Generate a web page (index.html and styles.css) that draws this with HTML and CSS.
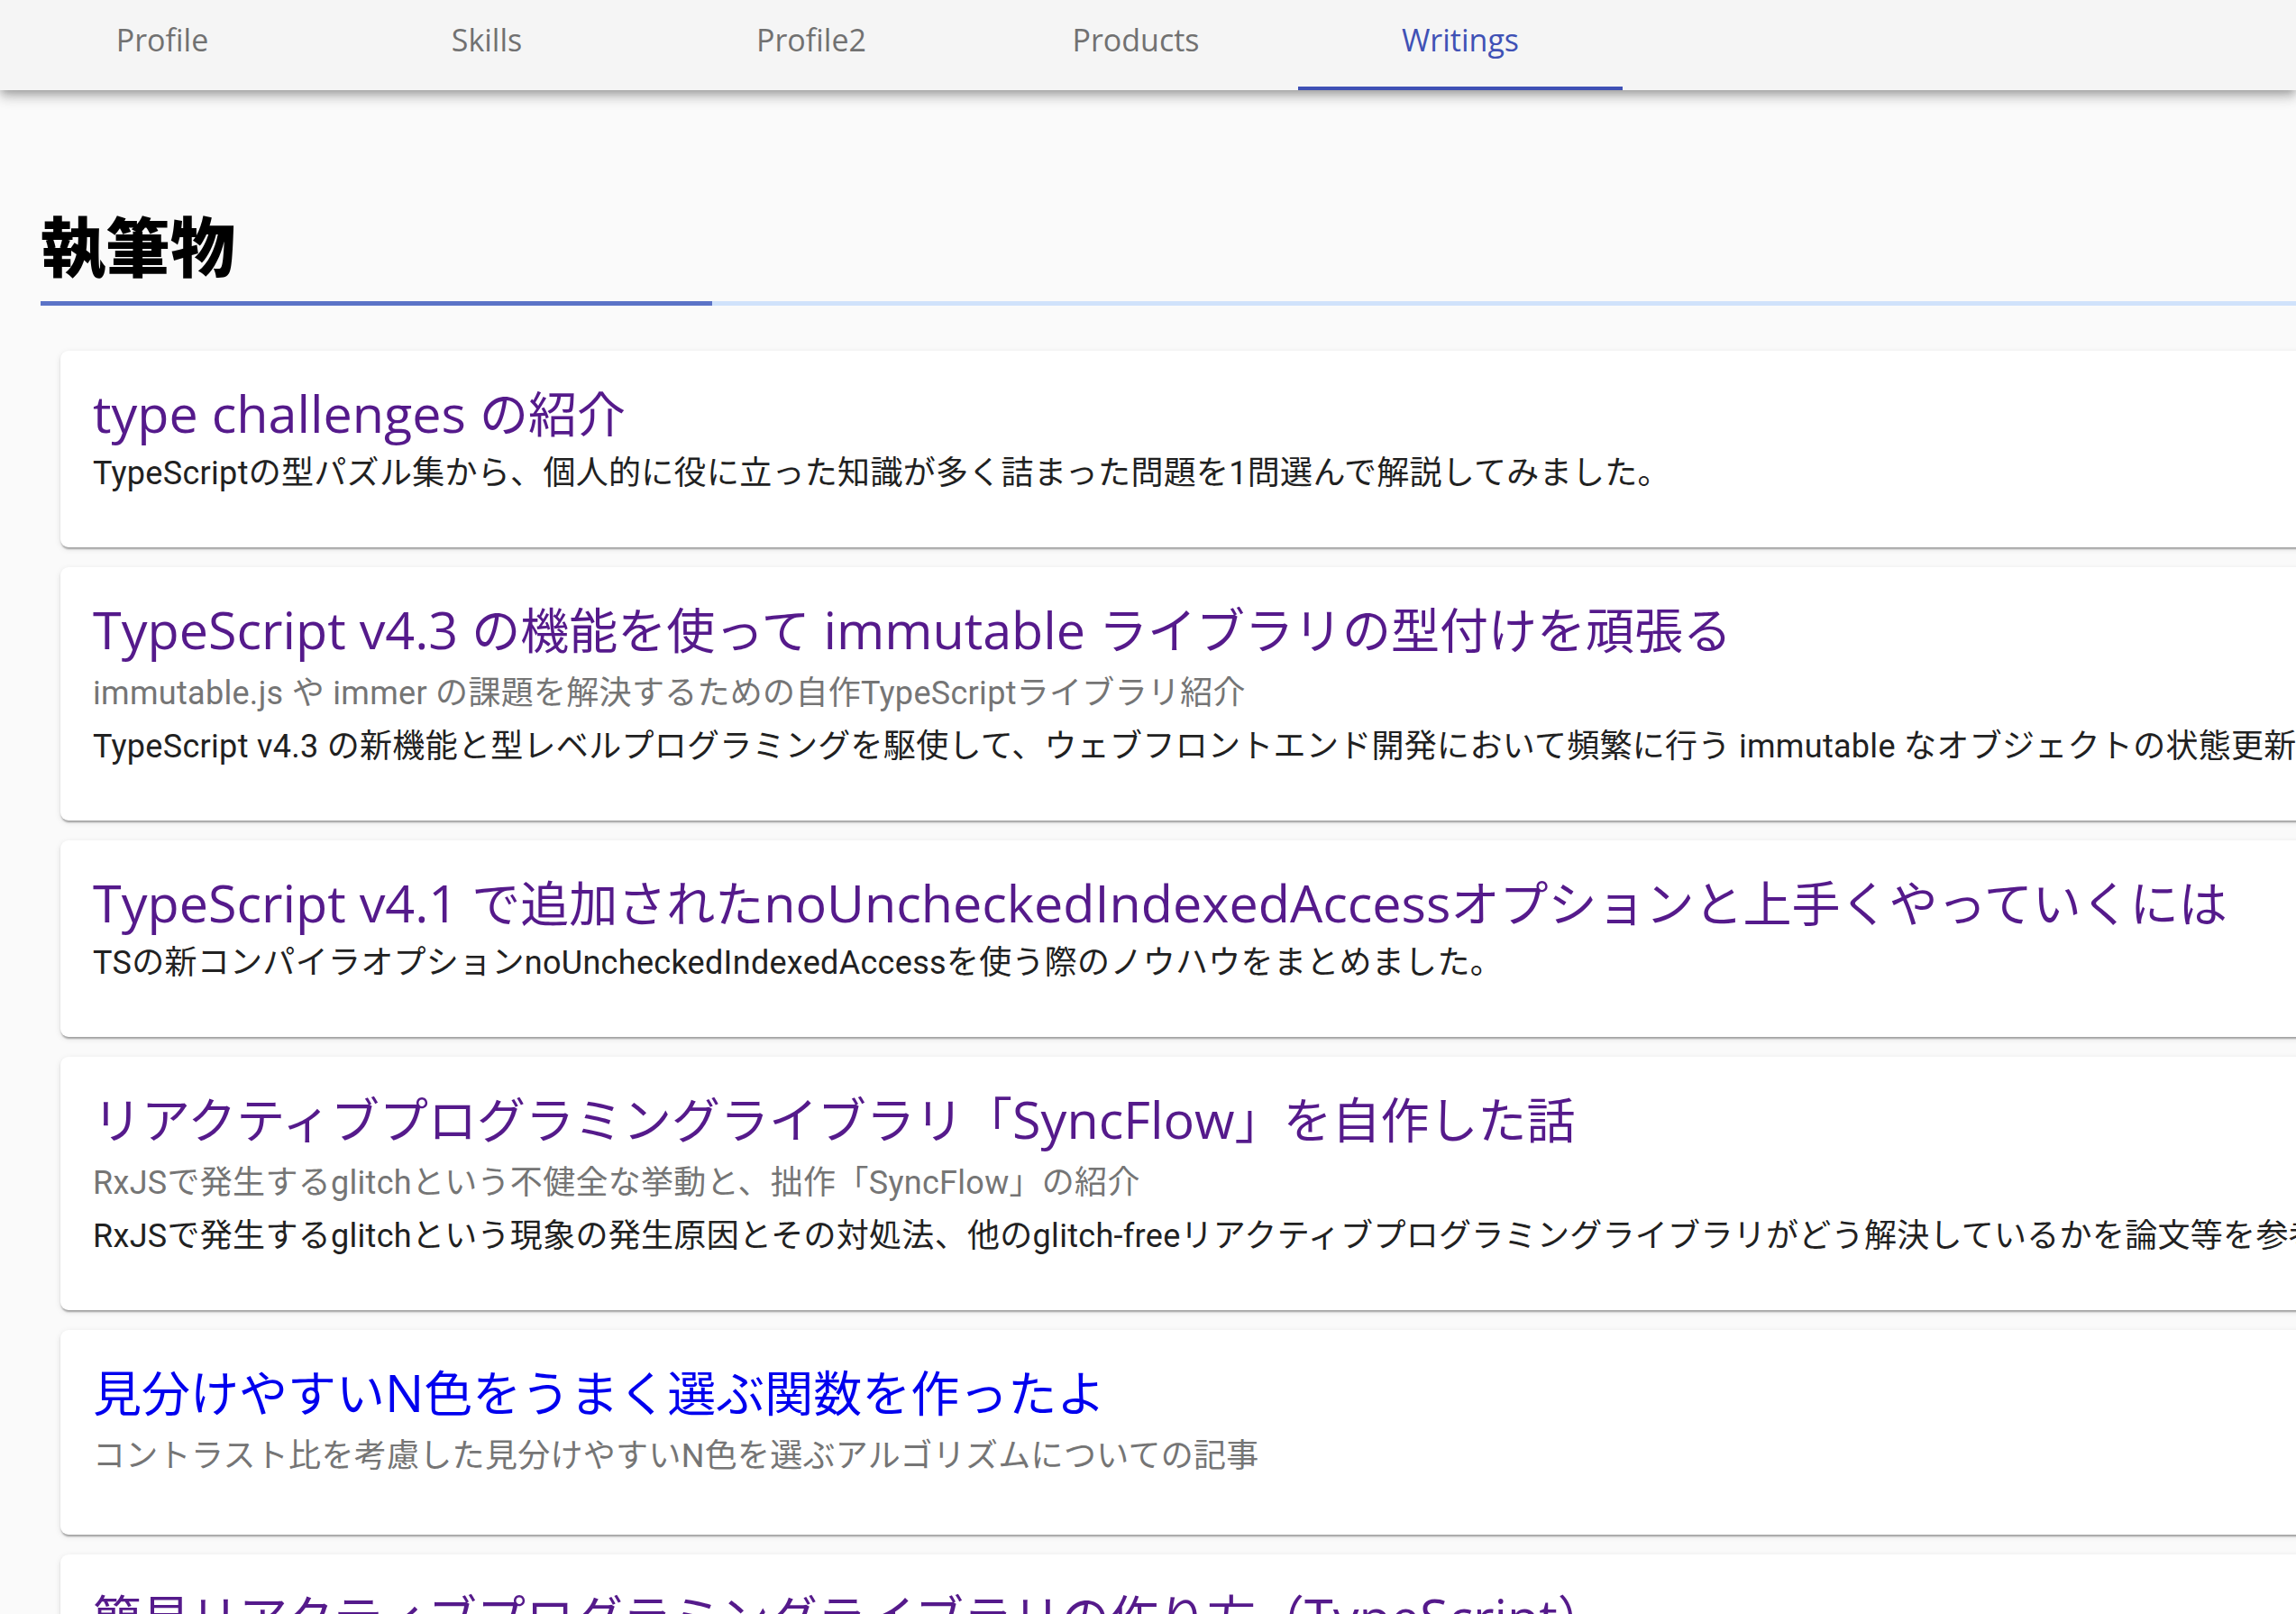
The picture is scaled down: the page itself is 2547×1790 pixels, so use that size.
FILE: index.html
```html
<!DOCTYPE html>
<html lang="ja">
<head>
<meta charset="utf-8">
<title>Writings</title>
<link rel="stylesheet" href="styles.css">
</head>
<body>
<nav class="nav">
  <div class="tab">Profile</div>
  <div class="tab">Skills</div>
  <div class="tab">Profile2</div>
  <div class="tab">Products</div>
  <div class="tab active">Writings</div>
</nav>
<main class="main">
  <h1 class="heading">執筆物</h1>
  <div class="rule"><div class="rule-main"></div><div class="rule-rest"></div></div>
  <div class="list">
    <div class="card">
      <a class="title visited" href="#"><span class="en">type challenges </span>の紹介</a>
      <div class="desc">TypeScriptの型パズル集から、個人的に役に立った知識が多く詰まった問題を1問選んで解説してみました。</div>
    </div>
    <div class="card">
      <a class="title visited" href="#"><span class="en">TypeScript v4.3 </span>の機能を使って<span class="en"> immutable </span>ライブラリの型付けを頑張る</a>
      <div class="subtitle">immutable.js や immer の課題を解決するための自作TypeScriptライブラリ紹介</div>
      <div class="desc">TypeScript v4.3 の新機能と型レベルプログラミングを駆使して、ウェブフロントエンド開発において頻繁に行う immutable なオブジェクトの状態更新を型安全かつ簡潔に書けるライブラリを作りました。</div>
    </div>
    <div class="card">
      <a class="title visited" href="#"><span class="en">TypeScript v4.1 </span>で追加された<span class="en">noUncheckedIndexedAccess</span>オプションと上手くやっていくには</a>
      <div class="desc">TSの新コンパイラオプションnoUncheckedIndexedAccessを使う際のノウハウをまとめました。</div>
    </div>
    <div class="card">
      <a class="title visited" href="#">リアクティブプログラミングライブラリ「<span class="en">SyncFlow</span>」を自作した話</a>
      <div class="subtitle">RxJSで発生するglitchという不健全な挙動と、拙作「SyncFlow」の紹介</div>
      <div class="desc">RxJSで発生するglitchという現象の発生原因とその対処法、他のglitch-freeリアクティブプログラミングライブラリがどう解決しているかを論文等を参考に調べ、自作ライブラリを実装しました。</div>
    </div>
    <div class="card">
      <a class="title unvisited" href="#">見分けやすい<span class="en">N</span>色をうまく選ぶ関数を作ったよ</a>
      <div class="subtitle">コントラスト比を考慮した見分けやすいN色を選ぶアルゴリズムについての記事</div>
    </div>
    <div class="card">
      <a class="title visited" href="#">簡易リアクティブプログラミングライブラリの作り方（<span class="en">TypeScript</span>）</a>
      <div class="desc">TypeScriptで簡易的なリアクティブプログラミングライブラリを実装する方法を解説しました。</div>
    </div>
  </div>
</main>
</body>
</html>
```
FILE: styles.css
```css
html, body {
  margin: 0;
  padding: 0;
  background: #fafafa;
  overflow: hidden;
}

.nav {
  height: 100px;
  background: #f5f5f5;
  display: flex;
  box-shadow: 0 4px 9px -2px rgba(0,0,0,0.25), 0 9px 11px 0 rgba(0,0,0,0.14), 0 2px 22px 0 rgba(0,0,0,0.10);
  position: relative;
  z-index: 2;
}

.tab {
  width: 360px;
  height: 100px;
  box-sizing: border-box;
  padding-top: 27px;
  text-align: center;
  font-family: "Open Sans", "Noto Sans", sans-serif;
  font-size: 34px;
  line-height: 34px;
  color: #717171;
  border-bottom: 4px solid transparent;
}

.tab.active {
  color: #3f51b5;
  border-bottom-color: #3f51b5;
}

.main {
  padding: 134px 0 0 45px;
}

.heading {
  margin: 0;
  font-family: "Noto Sans CJK JP", sans-serif;
  font-weight: 900;
  font-size: 72px;
  line-height: 72px;
  height: 72px;
  color: #000;
}

.rule {
  display: flex;
  height: 5px;
  margin-top: 28px;
}

.rule-main {
  width: 745px;
  background: #5b73c7;
}

.rule-rest {
  flex: 1;
  background: #d0e2fb;
}

.list {
  margin-top: 50px;
  padding-left: 22px;
  width: max-content;
  display: flex;
  flex-direction: column;
  gap: 22px;
}

.card {
  background: #fff;
  border-radius: 9px;
  padding: 33px 36px 55px;
  white-space: nowrap;
  box-shadow: 0 4px 2px -2px rgba(0,0,0,0.2), 0 2px 2px 0 rgba(0,0,0,0.14), 0 2px 7px 0 rgba(0,0,0,0.10);
}

.title {
  display: block;
  height: 76px;
  font-family: "Open Sans", "Noto Sans CJK JP", sans-serif;
  font-size: 54px;
  line-height: 72px;
  text-decoration: none;
}

.title .en {
  font-size: 57.5px;
}

.title.visited {
  color: #551a8b;
}

.title.unvisited {
  color: #0000ee;
}

.subtitle {
  height: 63px;
  font-family: Roboto, "Noto Sans CJK JP", sans-serif;
  font-size: 36px;
  line-height: 63px;
  letter-spacing: 0.3px;
  color: #757575;
}

.desc {
  height: 54px;
  font-family: Roboto, "Noto Sans CJK JP", sans-serif;
  font-size: 36px;
  line-height: 54px;
  letter-spacing: 0.3px;
  color: #212121;
}
```
